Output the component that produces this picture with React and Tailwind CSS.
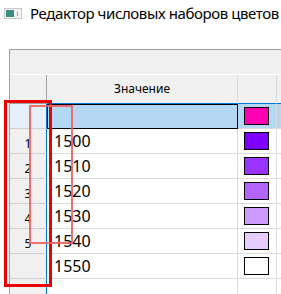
const rows = [
  { n: '', v: '', c: '#ff00b4', sel: true },
  { n: '1', v: '1500', c: '#8000ff' },
  { n: '2', v: '1510', c: '#9933ff' },
  { n: '3', v: '1520', c: '#b366ff' },
  { n: '4', v: '1530', c: '#cc99ff' },
  { n: '5', v: '1540', c: '#e6ccff' },
  { n: '', v: '1550', c: '#ffffff' },
  { n: '', v: '', c: null },
];

export default function App() {
  return (
    <div className="relative w-[281px] h-[294px] overflow-hidden bg-white font-['Noto_Sans',sans-serif] text-black">
      {/* Window title */}
      <div className="flex items-center h-[27px] pl-[4px] gap-[8px]">
        <div className="flex items-center w-[18px] h-[11px] border border-[#c8c8c8] bg-[#f4f4f4] pl-[1px] gap-[3px]">
          <div className="w-[8px] h-[7px] bg-[#3d8c84]" />
          <div className="w-[1px] h-[4px] bg-[#9a9a9a]" />
        </div>
        <span className="text-[15px] leading-none tracking-[-0.4px] whitespace-nowrap">Редактор числовых наборов цветов</span>
      </div>

      {/* Table */}
      <div className="mt-[22px] ml-[9px] w-[300px] border-t border-l border-[#a0a0a0]">
        <div className="h-[25px] bg-[#f0f0f0] border-b border-white" />
        <div className="flex h-[29px] bg-[#f0f0f0]">
          <div className="w-[37px] border-r border-b border-[#a0a0a0]" />
          <div className="w-[191px] flex items-center justify-center text-[12px] border-r border-[#dadada] border-b border-b-[#0078d7]">Значение</div>
          <div className="w-[39px] border-r border-[#dadada] border-b border-b-[#0078d7]" />
          <div className="flex-1 border-b border-[#0078d7]" />
        </div>
        {rows.map((r, i) => (
          <div key={i} className={`flex h-[25px] ${r.sel ? 'bg-[#b4d7f4]' : 'bg-white'}`}>
            <div className={`w-[37px] flex items-end justify-center pb-[3px] text-[12px] leading-none border-r border-r-[#0078d7] border-b border-b-[#d0d0d0] ${r.sel ? 'bg-[#e6f0fa]' : 'bg-[#f0f0f0]'}`}>{r.n}</div>
            <div className={`w-[191px] flex items-center pl-[7px] text-[16px] border-r ${r.sel ? 'border border-black' : 'border-b border-[#dadada]'}`}>{r.v}</div>
            <div className="w-[39px] flex items-center pl-[6px] border-r border-b border-[#dadada]">
              {r.c && <div className="w-[25px] h-[18px] border border-black" style={{ backgroundColor: r.c }} />}
            </div>
            <div className="flex-1 border-b border-[#dadada]" />
          </div>
        ))}
      </div>

      {/* Annotation boxes */}
      <div className="absolute left-[4px] top-[100px] w-[48px] h-[187px] border-[3px] border-[#ee0000]" />
      <div className="absolute left-[29px] top-[105px] w-[44px] h-[139px] border-2 border-[#f06060]/90" />
    </div>
  );
}
